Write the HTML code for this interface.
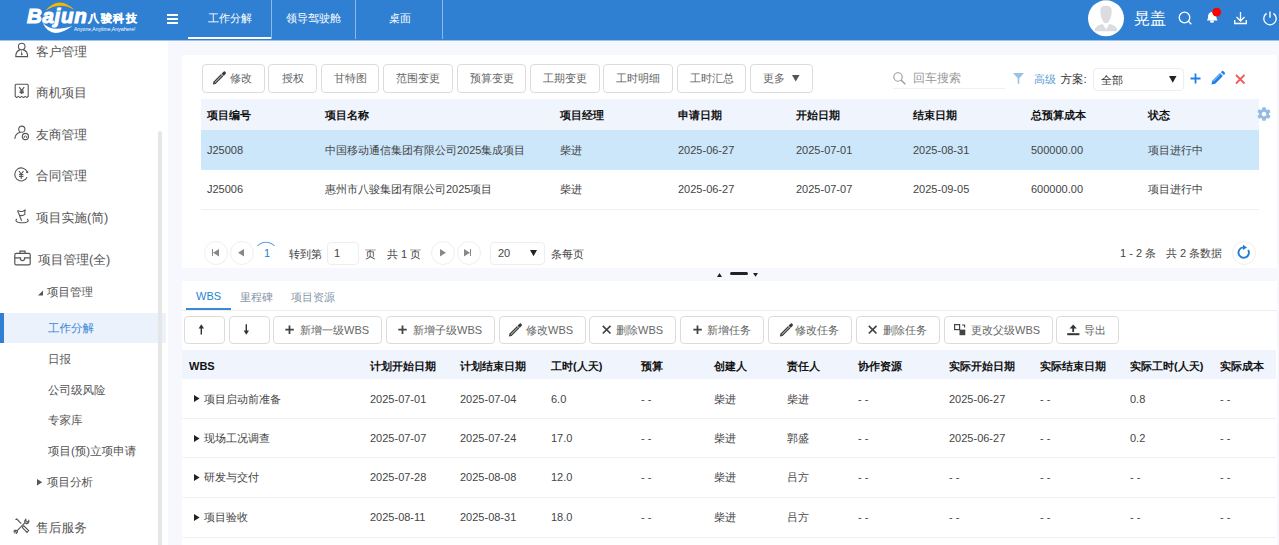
<!DOCTYPE html>
<html><head><meta charset="utf-8">
<style>
*{box-sizing:border-box;margin:0;padding:0}
html,body{width:1279px;height:545px;overflow:hidden}
body{position:relative;background:#f6f8fd;font-family:"Liberation Sans",sans-serif;color:#333;font-size:11px}
.a{position:absolute}
svg{position:absolute;overflow:visible}
#hdr{left:0;top:0;width:1279px;height:40px;background:#2f80d2}
.tab{position:absolute;top:0;height:40px;line-height:37px;color:#fff;font-size:11px;text-align:center}
.sep{position:absolute;top:0;width:1px;height:39px;background:rgba(255,255,255,.45)}
#side{left:0;top:40px;width:168px;height:505px;background:#fff;overflow:hidden}
.mi{position:absolute;left:36px;font-size:12.75px;text-rendering:geometricPrecision;line-height:18px;color:#555;white-space:nowrap}
.si{position:absolute;left:48px;font-size:11.5px;text-rendering:geometricPrecision;line-height:15px;color:#555;white-space:nowrap}
.card{position:absolute;background:#fff;border-radius:4px}
.btn{position:absolute;top:64px;height:29px;border:1px solid #dcdcdc;border-radius:4px;background:#fff;color:#666;font-size:11px;line-height:26px;text-align:center;white-space:nowrap;line-height:27px}
.th{position:absolute;font-weight:bold;color:#111;font-size:11px;line-height:14px;white-space:nowrap}
.td{position:absolute;color:#444;font-size:11px;line-height:14px;white-space:nowrap}
.pc{position:absolute;top:241px;width:24px;height:24px;border:1px solid #efefef;border-radius:50%}
.b2{position:absolute;top:316px;height:28px;border:1px solid #dcdcdc;border-radius:4px;background:#fff;color:#666;font-size:11px;line-height:26px;white-space:nowrap}
.row{position:absolute;left:201px;width:1058px;border-bottom:1px solid #eff1f4}
.row2{position:absolute;left:182px;width:1094px;border-bottom:1px solid #eff1f4}
</style></head><body>

<!-- HEADER -->
<div id="hdr" class="a">
  <!-- logo -->
  <svg width="130" height="40" style="left:20px;top:0">
    <path d="M25 11 Q39 -5.5 54.5 10 Q40 1 25 11 Z" fill="#f5b800"/>
    <path d="M22.5 22.5 Q31 41.5 52.5 26 Q31 33 22.5 22.5 Z" fill="#fff"/>
  </svg>
  <div class="a" style="left:27px;top:5px;font-size:20.5px;font-weight:bold;font-style:italic;color:#fff;line-height:22px;letter-spacing:0.7px;-webkit-text-stroke:1.1px #fff">Bajun</div>
  <div class="a" style="left:88px;top:11px;font-size:11px;font-weight:bold;color:#fff;line-height:14px;letter-spacing:1.6px;-webkit-text-stroke:0.3px #fff">八骏科技</div>
  <div class="a" style="left:74px;top:26px;font-size:5px;color:#fff;line-height:6px;white-space:nowrap">Anyone,Anytime,Anywhere!</div>
  <div class="a" style="left:167px;top:14px;width:11px;height:1.5px;background:#fff"></div>
  <div class="a" style="left:167px;top:18px;width:11px;height:1.5px;background:#fff"></div>
  <div class="a" style="left:167px;top:22px;width:11px;height:1.5px;background:#fff"></div>
  <div class="tab" style="left:188px;width:83px">工作分解</div>
  <div class="a" style="left:188px;top:37px;width:83px;height:2px;background:#fff"></div>
  <div class="sep" style="left:271px"></div>
  <div class="tab" style="left:272px;width:83px">领导驾驶舱</div>
  <div class="sep" style="left:355px"></div>
  <div class="tab" style="left:357px;width:86px">桌面</div>
  <div class="sep" style="left:442px"></div>
  <!-- avatar -->
  <svg width="36" height="37" style="left:1088px;top:0">
    <circle cx="18" cy="18.3" r="18" fill="#fff"/>
    <path d="M12.3 10.5 Q12.3 5.8 18 5.8 Q23.7 5.8 23.7 10.5 Q23.7 17.5 20.3 22.3 Q18 24.2 15.7 22.3 Q12.3 17.5 12.3 10.5 Z" fill="#dcdbe0"/>
    <path d="M6.5 31.3 Q6.8 26.3 12 24.8 L14.8 24 L18 29.5 L21.2 24 L24 24.8 Q29.2 26.3 29.5 31.3 Z" fill="#dcdbe0"/>
  </svg>
  <div class="a" style="left:1134px;top:9px;font-size:16px;color:#fff;line-height:20px">晃盖</div>
  <!-- icons -->
  <svg width="16" height="16" style="left:1178px;top:11px">
    <circle cx="6.5" cy="6.5" r="5.3" stroke="#fff" stroke-width="1.3" fill="none"/>
    <line x1="10.3" y1="10.3" x2="13.3" y2="13.3" stroke="#fff" stroke-width="1.4"/>
  </svg>
  <svg width="16" height="16" style="left:1206px;top:9px">
    <path d="M5.5 3 Q1.5 4 2 9 L1 11.5 L11.5 11.5 L10.5 9 Q10.5 4 6.5 3 Z" fill="#fff"/>
    <ellipse cx="6" cy="12.5" rx="2" ry="1.2" fill="#fff"/>
    <circle cx="10.7" cy="3.2" r="4.4" fill="#f00"/>
  </svg>
  <svg width="16" height="16" style="left:1234px;top:11px">
    <path d="M6.5 1 V10 M2.5 6 L6.5 10 L10.5 6" stroke="#fff" stroke-width="1.3" fill="none"/>
    <path d="M0.7 9 V12.5 H12.3 V9" stroke="#fff" stroke-width="1.3" fill="none"/>
  </svg>
  <svg width="16" height="16" style="left:1263px;top:11px">
    <path d="M3.6 2.4 A6.2 6.2 0 1 0 10.4 2.4" stroke="#fff" stroke-width="1.3" fill="none"/>
    <line x1="7" y1="0.6" x2="7" y2="6.8" stroke="#fff" stroke-width="1.4"/>
  </svg>
</div>

<div class="a" style="left:0;top:40px;width:1279px;height:1px;background:rgba(47,128,210,.45);z-index:5"></div>
<!-- SIDEBAR -->
<div id="side" class="a">
  <svg width="16" height="16" style="left:14px;top:2px" fill="none" stroke="#555" stroke-width="1.1">
    <circle cx="7.7" cy="4.6" r="3.3"/>
    <path d="M6.2 7.9 C3.8 8.4 1.8 10.2 1.8 14.6 H13.6 C13.6 10.2 11.6 8.4 9.2 7.9"/>
    <path d="M7.7 8.2 L6.9 12.6 L7.7 13.4 L8.5 12.6 Z" fill="#555" stroke="none"/>
  </svg>
  <svg width="16" height="16" style="left:14px;top:43px" fill="none" stroke="#555" stroke-width="1.1">
    <path d="M1.2 13.2 V2.2 Q1.2 1.2 2.2 1.2 H13.2 Q14.2 1.2 14.2 2.2 V13.2 L12.9 14.6 L11.2 13.4 L9.5 14.6 L7.8 13.4 L6.1 14.6 L4.4 13.4 L2.7 14.6 Z"/>
    <path d="M5.2 4.2 L7.7 7.6 L10.2 4.2 M7.7 7.6 V11 M5.6 8.2 H9.8 M5.6 9.7 H9.8" stroke-width="1.2"/>
  </svg>
  <svg width="16" height="16" style="left:14px;top:85px" fill="none" stroke="#555" stroke-width="1.1">
    <circle cx="7.8" cy="4.2" r="3.1"/>
    <path d="M0.8 13.9 Q1.2 8.3 6.6 7.3"/>
    <circle cx="11.4" cy="11.5" r="3.1"/>
    <path d="M10.1 13 V11.6 Q11.4 10.3 12.7 11.6 V13" stroke-width="0.9"/>
  </svg>
  <svg width="16" height="16" style="left:13px;top:126px" fill="none" stroke="#555" stroke-width="1.1">
    <path d="M14.3 6 A6.5 6.5 0 1 0 14.1 11.3"/>
    <path d="M12.6 6.8 L15.3 7.2 L15.1 4.4 Z" fill="#555" stroke="none"/>
    <path d="M5.9 5 L8.2 8 L10.5 5 M8.2 8 V13 M6 8.6 H10.4 M6 10.5 H10.4" stroke-width="1.1"/>
  </svg>
  <svg width="16" height="16" style="left:14px;top:168px" fill="none" stroke="#555" stroke-width="1.1">
    <path d="M3.6 2.6 L7.6 12.8"/>
    <path d="M3.6 2.6 Q6.5 4 9 3.2 Q10.6 2.7 11.4 1.6 Q10.2 4.5 10.9 6.4 Q8 8.6 5.3 7"/>
    <path d="M2.8 11 Q0.6 13.2 4 14.2 Q8.2 15.3 12.4 14.2 Q15.6 13.2 13.2 11"/>
  </svg>
  <svg width="18" height="16" style="left:14px;top:210px" fill="none" stroke="#555" stroke-width="1.2">
    <path d="M6 3.2 V1.2 H11 V3.2"/>
    <rect x="0.8" y="3.3" width="15.4" height="11.5" rx="1.4"/>
    <path d="M0.8 7.9 H6.5 V9.6 Q8.5 11.6 10.5 9.6 V7.9 H16.2"/>
  </svg>
  <svg width="16" height="16" style="left:14px;top:478px" fill="none" stroke="#555" stroke-width="1.1">
    <path d="M1.5 1.8 L2.8 1 L7.2 5.6"/>
    <path d="M8.8 8.6 L9.8 7.8 L14.6 12.6 L13 14.4 L8.4 9.6 Z"/>
    <path d="M3.2 12.6 L10.8 4.8"/>
    <path d="M10.8 4.8 Q10 2.6 11.8 1.2 L12.2 3.6 L13.6 4 L14.8 2.6 Q15.2 5.2 12.8 5.8 Z"/>
    <path d="M3.2 12.6 Q4 14.8 2.2 15.4 L1.8 13.2 L0.6 12.8 L0.2 14 Q-0.4 11.4 3.2 12.6 Z"/>
  </svg>

  <div class="mi" style="top:3px">客户管理</div>
  <div class="mi" style="top:44px">商机项目</div>
  <div class="mi" style="top:86px">友商管理</div>
  <div class="mi" style="top:127px">合同管理</div>
  <div class="mi" style="top:169px">项目实施(简)</div>
  <div class="mi" style="top:211px;left:38px">项目管理(全)</div>
  <svg width="10" height="10" style="left:37.5px;top:249.5px"><polygon points="0,5.5 5,5.5 5,0.5" fill="#555"/></svg>
  <div class="si" style="top:246px;left:47px">项目管理</div>
  <div class="a" style="left:0;top:273px;width:166px;height:30px;background:#ebf2fb"></div>
  <div class="a" style="left:0;top:273px;width:4px;height:30px;background:#2f80d2"></div>
  <div class="si" style="top:282px;color:#3a87d8">工作分解</div>
  <div class="si" style="top:313px">日报</div>
  <div class="si" style="top:344px">公司级风险</div>
  <div class="si" style="top:374px">专家库</div>
  <div class="si" style="top:405px">项目(预)立项申请</div>
  <svg width="10" height="10" style="left:37px;top:439px"><polygon points="0,0 5.2,3.3 0,6.6" fill="#555"/></svg>
  <div class="si" style="top:436px;left:47px">项目分析</div>
  <div class="mi" style="top:479px">售后服务</div>
  <div class="a" style="left:158px;top:91px;width:4px;height:420px;border-radius:2px;background:#e6e6e6"></div>
</div>

<!-- TOP CARD -->
<div class="card" style="left:182px;top:55px;width:1095px;height:213px;border-radius:2px 2px 0 0"></div>
<div class="btn" style="left:202px;width:63px;padding-left:27px;text-align:left">修改</div>
<svg width="14" height="14" style="left:212px;top:71px">
  <polygon points="0.9,13.5 1.4,10.8 9.1,3.1 11.3,5.3 3.6,13" fill="#3a3a3a"/>
  <path d="M2.7 11.7 L9.9 4.5" stroke="#fff" stroke-width="0.8"/>
  <path d="M11 3.4 L12.4 2" stroke="#3a3a3a" stroke-width="3.1" stroke-linecap="round"/>
  <path d="M8.9 2.5 L11.9 5.5" stroke="#fff" stroke-width="0.8"/>
</svg>
<div class="btn" style="left:268px;width:49px">授权</div>
<div class="btn" style="left:321px;width:58px">甘特图</div>
<div class="btn" style="left:383px;width:70px">范围变更</div>
<div class="btn" style="left:457px;width:69px">预算变更</div>
<div class="btn" style="left:530px;width:70px">工期变更</div>
<div class="btn" style="left:603px;width:70px">工时明细</div>
<div class="btn" style="left:677px;width:69px">工时汇总</div>
<div class="btn" style="left:750px;width:63px;padding-left:12px;text-align:left">更多</div>
<svg width="10" height="10" style="left:792px;top:75px"><polygon points="0,0 7.5,0 3.75,6.5" fill="#555"/></svg>

<!-- search -->
<svg width="14" height="14" style="left:893px;top:72px">
  <circle cx="5" cy="5" r="4.2" stroke="#999" stroke-width="1.1" fill="none"/>
  <line x1="8" y1="8" x2="12.3" y2="12.3" stroke="#999" stroke-width="1.4"/>
</svg>
<div class="a" style="left:913px;top:71px;font-size:12px;line-height:14px;color:#999">回车搜索</div>
<div class="a" style="left:893px;top:88px;width:112px;height:1px;background:#f0f0f0"></div>
<svg width="12" height="12" style="left:1012.5px;top:73px">
  <path d="M0 0 H11 L6.3 5.2 V10.8 L4.7 10.8 V5.2 Z" fill="#9ac2e8"/>
</svg>
<div class="a" style="left:1034px;top:72px;font-size:11px;line-height:14px;color:#5b9cd8">高级</div>
<div class="a" style="left:1060.5px;top:72.8px;font-size:11.5px;text-rendering:geometricPrecision;line-height:14px;color:#333">方案:</div>
<div class="a" style="left:1093px;top:68px;width:91px;height:23px;border:1px solid #eee;border-radius:4px"></div>
<div class="a" style="left:1101px;top:73px;font-size:11px;line-height:14px;color:#333">全部</div>
<svg width="10" height="10" style="left:1168.5px;top:76px"><polygon points="0,0 7.5,0 3.75,6.8" fill="#222"/></svg>
<svg width="12" height="12" style="left:1190px;top:73px">
  <path d="M5.5 0.5 V10.5 M0.5 5.5 H10.5" stroke="#1e7fe8" stroke-width="1.8"/>
</svg>
<svg width="14" height="14" style="left:1211px;top:71px">
  <path d="M0.5 13.5 L1.3 9.8 L9 2.1 L11.9 5 L4.2 12.7 Z" fill="#1e7fe8"/>
  <path d="M2.3 10.3 L9.2 3.4" stroke="#fff" stroke-width="0.7"/>
  <path d="M9.9 1.2 L11 0.1 Q11.6 -0.4 12.2 0.1 L13.9 1.8 Q14.4 2.4 13.9 3 L12.8 4.1 Z" fill="#1e7fe8"/>
</svg>
<svg width="12" height="12" style="left:1235px;top:74px">
  <path d="M1 1 L9.5 9.5 M9.5 1 L1 9.5" stroke="#f25b5b" stroke-width="1.8"/>
</svg>

<!-- table 1 -->
<div class="a" style="left:201px;top:99px;width:1058px;height:31px;background:#f0f5fd"></div>
<div class="th" style="left:207px;top:108px">项目编号</div>
<div class="th" style="left:325px;top:108px">项目名称</div>
<div class="th" style="left:560px;top:108px">项目经理</div>
<div class="th" style="left:678px;top:108px">申请日期</div>
<div class="th" style="left:796px;top:108px">开始日期</div>
<div class="th" style="left:913px;top:108px">结束日期</div>
<div class="th" style="left:1031px;top:108px">总预算成本</div>
<div class="th" style="left:1148px;top:108px">状态</div>
<svg width="16" height="16" style="left:1256px;top:106px" viewBox="0 0 24 24">
  <path fill="#94bbe3" d="M19.4 13c.04-.32.1-.65.1-1s-.03-.68-.07-1l2.1-1.65c.2-.15.24-.42.12-.64l-2-3.46c-.12-.22-.39-.3-.61-.22l-2.49 1c-.52-.4-1.08-.73-1.69-.98l-.38-2.65C14.46 2.18 14.25 2 14 2h-4c-.25 0-.46.18-.5.42l-.38 2.65c-.61.25-1.17.59-1.69.98l-2.49-1c-.23-.09-.49 0-.61.22l-2 3.46c-.13.22-.07.49.12.64L4.57 11c-.04.32-.07.65-.07 1s.03.68.07 1l-2.11 1.65c-.19.15-.24.42-.12.64l2 3.46c.12.22.39.3.61.22l2.49-1c.52.4 1.08.73 1.69.98l.38 2.65c.04.24.25.42.5.42h4c.25 0 .46-.18.5-.42l.38-2.65c.61-.25 1.17-.59 1.69-.98l2.49 1c.23.09.49 0 .61-.22l2-3.46c.12-.22.07-.49-.12-.64L19.4 13zM12 15.5c-1.93 0-3.5-1.57-3.5-3.5s1.57-3.5 3.5-3.5 3.5 1.57 3.5 3.5-1.57 3.5-3.5 3.5z"/>
</svg>
<div class="a" style="left:201px;top:130px;width:1058px;height:40px;background:#cce6fa"></div>
<div class="row" style="top:170px;height:40px"></div>
<div class="td" style="left:207px;top:143px">J25008</div>
<div class="td" style="left:325px;top:143px">中国移动通信集团有限公司2025集成项目</div>
<div class="td" style="left:560px;top:143px">柴进</div>
<div class="td" style="left:678px;top:143px">2025-06-27</div>
<div class="td" style="left:796px;top:143px">2025-07-01</div>
<div class="td" style="left:913px;top:143px">2025-08-31</div>
<div class="td" style="left:1031px;top:143px">500000.00</div>
<div class="td" style="left:1148px;top:143px">项目进行中</div>
<div class="td" style="left:207px;top:182px">J25006</div>
<div class="td" style="left:325px;top:182px">惠州市八骏集团有限公司2025项目</div>
<div class="td" style="left:560px;top:182px">柴进</div>
<div class="td" style="left:678px;top:182px">2025-06-27</div>
<div class="td" style="left:796px;top:182px">2025-07-07</div>
<div class="td" style="left:913px;top:182px">2025-09-05</div>
<div class="td" style="left:1031px;top:182px">600000.00</div>
<div class="td" style="left:1148px;top:182px">项目进行中</div>

<!-- pagination -->
<div class="pc" style="left:204px"></div>
<div class="pc" style="left:230px"></div>
<div class="a" style="left:212px;top:248.5px;width:1.3px;height:7.5px;background:#888"></div>
<svg width="10" height="10" style="left:213px;top:248.5px"><polygon points="6,0 0,3.7 6,7.4" fill="#888"/></svg>
<svg width="10" height="10" style="left:238px;top:248.5px"><polygon points="6,0 0,3.7 6,7.4" fill="#888"/></svg>
<svg width="24" height="24" style="left:254px;top:240px">
  <path d="M3.5 6 A 11.5 11.5 0 0 1 20.5 6" stroke="#5aa0dc" stroke-width="1.1" fill="none"/>
</svg>
<div class="td" style="left:264px;top:246px;color:#2a7ec8">1</div>
<div class="td" style="left:289px;top:247px">转到第</div>
<div class="a" style="left:327px;top:242px;width:32px;height:23px;border:1px solid #eee;border-radius:4px"></div>
<div class="td" style="left:334px;top:246px">1</div>
<div class="td" style="left:365px;top:247px">页</div>
<div class="td" style="left:387px;top:247px">共 1 页</div>
<div class="pc" style="left:431px"></div>
<div class="pc" style="left:457px"></div>
<svg width="10" height="10" style="left:440px;top:248.5px"><polygon points="0,0 6,3.7 0,7.4" fill="#888"/></svg>
<svg width="10" height="10" style="left:464px;top:248.5px"><polygon points="0,0 6,3.7 0,7.4" fill="#888"/></svg>
<div class="a" style="left:470px;top:248.5px;width:1.3px;height:7.5px;background:#888"></div>
<div class="a" style="left:490px;top:242px;width:55px;height:23px;border:1px solid #eee;border-radius:4px"></div>
<div class="td" style="left:498px;top:246px">20</div>
<svg width="10" height="10" style="left:530px;top:250px"><polygon points="0,0 7,0 3.5,6.2" fill="#222"/></svg>
<div class="td" style="left:551px;top:247px">条每页</div>
<div class="td" style="left:1120px;top:246px">1 - 2 条</div>
<div class="td" style="left:1166px;top:246px">共 2 条数据</div>
<div class="pc" style="left:1232px"></div>
<svg width="14" height="14" style="left:1237px;top:246px">
  <path d="M11.2 4 A5.2 5.2 0 1 1 6.3 1.4" stroke="#1e7ed0" stroke-width="1.9" fill="none"/>
  <path d="M6 -1.3 L10 1.4 L6 4.1 Z" fill="#1e7ed0"/>
</svg>

<!-- splitter -->
<svg width="10" height="10" style="left:716.7px;top:273px"><polygon points="0,4 5,4 2.5,0" fill="#222"/></svg>
<div class="a" style="left:730px;top:272px;width:18px;height:3px;border-radius:1.5px;background:#222"></div>
<svg width="10" height="10" style="left:753.2px;top:273px"><polygon points="0,0 5,0 2.5,3.7" fill="#222"/></svg>

<!-- BOTTOM CARD -->
<div class="card" style="left:182px;top:281px;width:1095px;height:280px;border-radius:0"></div>
<div class="a" style="left:196px;top:289px;font-size:11px;line-height:14px;color:#1f86cf">WBS</div>
<div class="a" style="left:240px;top:290px;font-size:11px;line-height:14px;color:#8595a9">里程碑</div>
<div class="a" style="left:291px;top:290px;font-size:11px;line-height:14px;color:#8595a9">项目资源</div>
<div class="a" style="left:182px;top:310px;width:1095px;height:1px;background:#eeeeee"></div>
<div class="a" style="left:186px;top:308px;width:45px;height:2px;background:#3a89d6"></div>

<div class="b2" style="left:184px;width:41px;"></div>
<div class="b2" style="left:229px;width:41px;"></div>
<div class="b2" style="left:273px;width:109px;padding-left:26px">新增一级WBS</div>
<div class="b2" style="left:386px;width:109px;padding-left:26px">新增子级WBS</div>
<div class="b2" style="left:499px;width:87px;padding-left:26px">修改WBS</div>
<div class="b2" style="left:589px;width:87px;padding-left:26px">删除WBS</div>
<div class="b2" style="left:680px;width:84px;padding-left:26px">新增任务</div>
<div class="b2" style="left:768px;width:84px;padding-left:26px">修改任务</div>
<div class="b2" style="left:856px;width:84px;padding-left:26px">删除任务</div>
<div class="b2" style="left:944px;width:109px;padding-left:26px">更改父级WBS</div>
<div class="b2" style="left:1056px;width:63px;padding-left:27px">导出</div>


<svg width="10" height="12" style="left:197px;top:324px"><path d="M4.3 3 V10.5" stroke="#333" stroke-width="1.4"/><path d="M1.6 4.4 L4.3 0.3 L7 4.4 Z" fill="#333"/></svg>
<svg width="10" height="12" style="left:242px;top:324px"><path d="M4.3 0.3 V7.8" stroke="#333" stroke-width="1.4"/><path d="M1.6 6.6 L4.3 10.7 L7 6.6 Z" fill="#333"/></svg>
<svg width="10" height="10" style="left:285px;top:325px"><path d="M4.5 0.5 V9 M0.3 4.7 H8.8" stroke="#444" stroke-width="1.8"/></svg>
<svg width="10" height="10" style="left:398px;top:325px"><path d="M4.5 0.5 V9 M0.3 4.7 H8.8" stroke="#444" stroke-width="1.8"/></svg>
<svg width="10" height="10" style="left:693px;top:325px"><path d="M4.5 0.5 V9 M0.3 4.7 H8.8" stroke="#444" stroke-width="1.8"/></svg>
<svg width="10" height="10" style="left:602px;top:325px"><path d="M0.8 0.8 L8.5 8.5 M8.5 0.8 L0.8 8.5" stroke="#444" stroke-width="1.7"/></svg>
<svg width="10" height="10" style="left:868px;top:325px"><path d="M0.8 0.8 L8.5 8.5 M8.5 0.8 L0.8 8.5" stroke="#444" stroke-width="1.7"/></svg>
<svg width="12" height="12" style="left:954px;top:324px"><rect x="0.6" y="0.6" width="5" height="5" fill="none" stroke="#444" stroke-width="1.2"/><rect x="5.5" y="5.6" width="5.8" height="5.6" fill="#444"/><path d="M8 1 H10.6 V3.6" fill="none" stroke="#444" stroke-width="1.1"/></svg>
<svg width="14" height="12" style="left:1067px;top:324px"><path d="M6.2 3 V8" stroke="#333" stroke-width="1.8"/><path d="M2.6 4.6 L6.2 0.4 L9.8 4.6 Z" fill="#333"/><rect x="0.2" y="9.2" width="12.2" height="2" fill="#333"/></svg>
<svg width="14" height="14" style="left:508px;top:323px">
  <polygon points="0.9,13.5 1.4,10.8 9.1,3.1 11.3,5.3 3.6,13" fill="#3a3a3a"/>
  <path d="M2.7 11.7 L9.9 4.5" stroke="#fff" stroke-width="0.8"/>
  <path d="M11 3.4 L12.4 2" stroke="#3a3a3a" stroke-width="3.1" stroke-linecap="round"/>
  <path d="M8.9 2.5 L11.9 5.5" stroke="#fff" stroke-width="0.8"/>
</svg>
<svg width="14" height="14" style="left:779px;top:323px">
  <polygon points="0.9,13.5 1.4,10.8 9.1,3.1 11.3,5.3 3.6,13" fill="#3a3a3a"/>
  <path d="M2.7 11.7 L9.9 4.5" stroke="#fff" stroke-width="0.8"/>
  <path d="M11 3.4 L12.4 2" stroke="#3a3a3a" stroke-width="3.1" stroke-linecap="round"/>
  <path d="M8.9 2.5 L11.9 5.5" stroke="#fff" stroke-width="0.8"/>
</svg>
<!-- table 2 -->
<div class="a" style="left:182px;top:350px;width:1094px;height:29px;background:#f0f5fd"></div>
<div class="th" style="left:189px;top:359px">WBS</div>
<div class="th" style="left:370px;top:359px">计划开始日期</div>
<div class="th" style="left:460px;top:359px">计划结束日期</div>
<div class="th" style="left:551px;top:359px">工时(人天)</div>
<div class="th" style="left:641px;top:359px">预算</div>
<div class="th" style="left:714px;top:359px">创建人</div>
<div class="th" style="left:787px;top:359px">责任人</div>
<div class="th" style="left:858px;top:359px">协作资源</div>
<div class="th" style="left:949px;top:359px">实际开始日期</div>
<div class="th" style="left:1040px;top:359px">实际结束日期</div>
<div class="th" style="left:1130px;top:359px">实际工时(人天)</div>
<div class="th" style="left:1220px;top:359px">实际成本</div>

<div class="row2" style="top:379px;height:40px"></div>
<div class="row2" style="top:418px;height:40px"></div>
<div class="row2" style="top:458px;height:40px"></div>
<div class="row2" style="top:498px;height:40px"></div>
<svg width="10" height="10" style="left:193.5px;top:395.0px"><polygon points="0,0 5.6,3.5 0,7" fill="#222"/></svg>
<div class="td" style="left:204px;top:392px">项目启动前准备</div>
<div class="td" style="left:370px;top:392px">2025-07-01</div>
<div class="td" style="left:460px;top:392px">2025-07-04</div>
<div class="td" style="left:551px;top:392px">6.0</div>
<div class="td" style="left:641px;top:392px">- -</div>
<div class="td" style="left:714px;top:392px">柴进</div>
<div class="td" style="left:787px;top:392px">柴进</div>
<div class="td" style="left:858px;top:392px">- -</div>
<div class="td" style="left:949px;top:392px">2025-06-27</div>
<div class="td" style="left:1040px;top:392px">- -</div>
<div class="td" style="left:1130px;top:392px">0.8</div>
<div class="td" style="left:1220px;top:392px">- -</div>
<svg width="10" height="10" style="left:193.5px;top:434.7px"><polygon points="0,0 5.6,3.5 0,7" fill="#222"/></svg>
<div class="td" style="left:204px;top:431px">现场工况调查</div>
<div class="td" style="left:370px;top:431px">2025-07-07</div>
<div class="td" style="left:460px;top:431px">2025-07-24</div>
<div class="td" style="left:551px;top:431px">17.0</div>
<div class="td" style="left:641px;top:431px">- -</div>
<div class="td" style="left:714px;top:431px">柴进</div>
<div class="td" style="left:787px;top:431px">郭盛</div>
<div class="td" style="left:858px;top:431px">- -</div>
<div class="td" style="left:949px;top:431px">2025-06-27</div>
<div class="td" style="left:1040px;top:431px">- -</div>
<div class="td" style="left:1130px;top:431px">0.2</div>
<div class="td" style="left:1220px;top:431px">- -</div>
<svg width="10" height="10" style="left:193.5px;top:474.2px"><polygon points="0,0 5.6,3.5 0,7" fill="#222"/></svg>
<div class="td" style="left:204px;top:470px">研发与交付</div>
<div class="td" style="left:370px;top:470px">2025-07-28</div>
<div class="td" style="left:460px;top:470px">2025-08-08</div>
<div class="td" style="left:551px;top:470px">12.0</div>
<div class="td" style="left:641px;top:470px">- -</div>
<div class="td" style="left:714px;top:470px">柴进</div>
<div class="td" style="left:787px;top:470px">吕方</div>
<div class="td" style="left:858px;top:470px">- -</div>
<div class="td" style="left:949px;top:470px">- -</div>
<div class="td" style="left:1040px;top:470px">- -</div>
<div class="td" style="left:1130px;top:470px">- -</div>
<div class="td" style="left:1220px;top:470px">- -</div>
<svg width="10" height="10" style="left:193.5px;top:513.9px"><polygon points="0,0 5.6,3.5 0,7" fill="#222"/></svg>
<div class="td" style="left:204px;top:510px">项目验收</div>
<div class="td" style="left:370px;top:510px">2025-08-11</div>
<div class="td" style="left:460px;top:510px">2025-08-31</div>
<div class="td" style="left:551px;top:510px">18.0</div>
<div class="td" style="left:641px;top:510px">- -</div>
<div class="td" style="left:714px;top:510px">柴进</div>
<div class="td" style="left:787px;top:510px">吕方</div>
<div class="td" style="left:858px;top:510px">- -</div>
<div class="td" style="left:949px;top:510px">- -</div>
<div class="td" style="left:1040px;top:510px">- -</div>
<div class="td" style="left:1130px;top:510px">- -</div>
<div class="td" style="left:1220px;top:510px">- -</div>
</body></html>
